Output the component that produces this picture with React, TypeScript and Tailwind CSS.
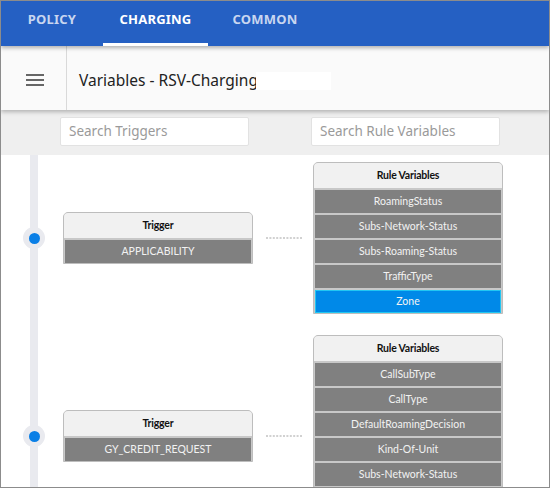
import React from "react";

const Dot = () => (
  <div className="w-[22px] h-[22px] flex-none rounded-full bg-[#e9eaef] flex items-center justify-center">
    <div className="w-[11px] h-[11px] rounded-full bg-[#0a7fe6]" />
  </div>
);

const Connector = () => (
  <div className="w-[60px] flex-none flex items-center pl-[13px]">
    <svg width="37" height="2" viewBox="0 0 37 2">
      <line x1="0" y1="1" x2="37" y2="1" stroke="#a3a3a3" strokeWidth="1" strokeDasharray="2 1.4" />
    </svg>
  </div>
);

const boxFont = { fontFamily: "Lato, 'Noto Sans', sans-serif" };

const Trigger = ({ name }: { name: string }) => (
  <div
    className="w-[190px] flex-none rounded-t-[5px] border border-[#bdbdbd] bg-[#c8c8c8] overflow-hidden"
    style={boxFont}
  >
    <div className="h-[25px] bg-[#f1f1f1] flex items-center justify-center text-[10.5px] font-bold text-[#111] tracking-[-0.2px]">
      Trigger
    </div>
    <div className="mt-[2px] mx-[1px] h-[23px] bg-[#808080] flex items-center justify-center text-[10.5px] text-[#f2f2f2]">
      {name}
    </div>
  </div>
);

const RuleBox = ({ items, active, extra }: { items: string[]; active?: string; extra?: boolean }) => (
  <div
    className="w-[190px] flex-none rounded-t-[5px] border border-[#bdbdbd] bg-[#c8c8c8] overflow-hidden"
    style={boxFont}
  >
    <div className="h-[25px] bg-[#f1f1f1] flex items-center justify-center text-[10.5px] font-bold text-[#111] tracking-[-0.2px]">
      Rule Variables
    </div>
    {items.map((it) =>
      it === active ? (
        <div
          key={it}
          className="mt-[2px] mx-[1px] h-[23px] bg-[#0089e8] border border-[#22c6f2] flex items-center justify-center text-[10.5px] text-[#f4f4f4]"
        >
          {it}
        </div>
      ) : (
        <div
          key={it}
          className="mt-[2px] mx-[1px] h-[23px] bg-[#808080] flex items-center justify-center text-[10.5px] text-[#f2f2f2]"
        >
          {it}
        </div>
      )
    )}
    {extra && (
      <div className="flex flex-col">
        <div className="mt-[2px] mx-[1px] h-[23px] bg-[#808080]" />
        <div className="mt-[2px] mx-[1px] h-[23px] bg-[#808080]" />
      </div>
    )}
  </div>
);

const Group = ({
  pt,
  trigger,
  items,
  active,
  extra,
}: {
  pt: string;
  trigger: string;
  items: string[];
  active?: string;
  extra?: boolean;
}) => (
  <div className="flex flex-none">
    <div className="w-[62px] flex-none flex pl-[29px]">
      <div className={`w-[8px] bg-[#e9eaef] flex flex-col ${pt}`}>
        <div className="flex-1 flex items-center justify-center">
          <Dot />
        </div>
      </div>
    </div>
    <div className={`flex items-center ${pt}`}>
      <Trigger name={trigger} />
      <Connector />
      <RuleBox items={items} active={active} extra={extra} />
    </div>
  </div>
);

export default function App() {
  return (
    <div
      className="w-[550px] h-[488px] border border-[#8c8c8c] overflow-hidden flex flex-col bg-white"
      style={{ fontFamily: "'Noto Sans', 'Open Sans', sans-serif" }}
    >
      <div className="h-[45px] flex-none bg-[#2560c3] flex shadow-[0_2px_4px_rgba(0,0,0,0.3)] relative z-20 text-[13px] font-bold tracking-[0.2px]">
        <div className="w-[102px] flex items-center justify-center pb-[5px] border-b-[3px] border-transparent text-[#c8d6f0]">
          POLICY
        </div>
        <div className="w-[105px] flex items-center justify-center pb-[5px] border-b-[3px] border-white text-white">
          CHARGING
        </div>
        <div className="w-[114px] flex items-center justify-center pb-[5px] border-b-[3px] border-transparent text-[#c8d6f0]">
          COMMON
        </div>
      </div>
      <div className="h-[64px] flex-none bg-[#fafafa] flex shadow-[0_2px_4px_rgba(0,0,0,0.25)] relative z-10">
        <div className="w-[66px] flex-none border-r border-[#d9d9d9] flex flex-col items-center justify-center gap-[3px] pl-[2px] pt-[4px]">
          <div className="w-[18px] h-[2px] bg-[#666]" />
          <div className="w-[18px] h-[2px] bg-[#666]" />
          <div className="w-[18px] h-[2px] bg-[#666]" />
        </div>
        <div className="flex items-center pl-[12px] pt-[5px] text-[15.5px] text-[#222]">
          <span>Variables - RSV-Charging</span>
          <span className="inline-block w-[75px] h-[18px] bg-white -ml-[2px]" />
        </div>
      </div>
      <div className="h-[45px] flex-none bg-[#efefef] flex items-start pt-[7px] pl-[59px]">
        <div className="w-[189px] h-[29px] bg-white border border-[#e2e2e2] rounded-[2px] flex items-center pl-[8px] text-[13.5px] text-[#9a9a9a]">
          Search Triggers
        </div>
        <div className="ml-[62px] w-[189px] h-[29px] bg-white border border-[#e2e2e2] rounded-[2px] flex items-center pl-[8px] text-[13.5px] text-[#9a9a9a]">
          Search Rule Variables
        </div>
      </div>
      <div className="flex-1 flex flex-col overflow-hidden">
        <Group
          pt="pt-[7px]"
          trigger="APPLICABILITY"
          items={["RoamingStatus", "Subs-Network-Status", "Subs-Roaming-Status", "TrafficType", "Zone"]}
          active="Zone"
        />
        <Group
          pt="pt-[21px]"
          trigger="GY_CREDIT_REQUEST"
          items={["CallSubType", "CallType", "DefaultRoamingDecision", "Kind-Of-Unit", "Subs-Network-Status"]}
          extra
        />
      </div>
    </div>
  );
}
